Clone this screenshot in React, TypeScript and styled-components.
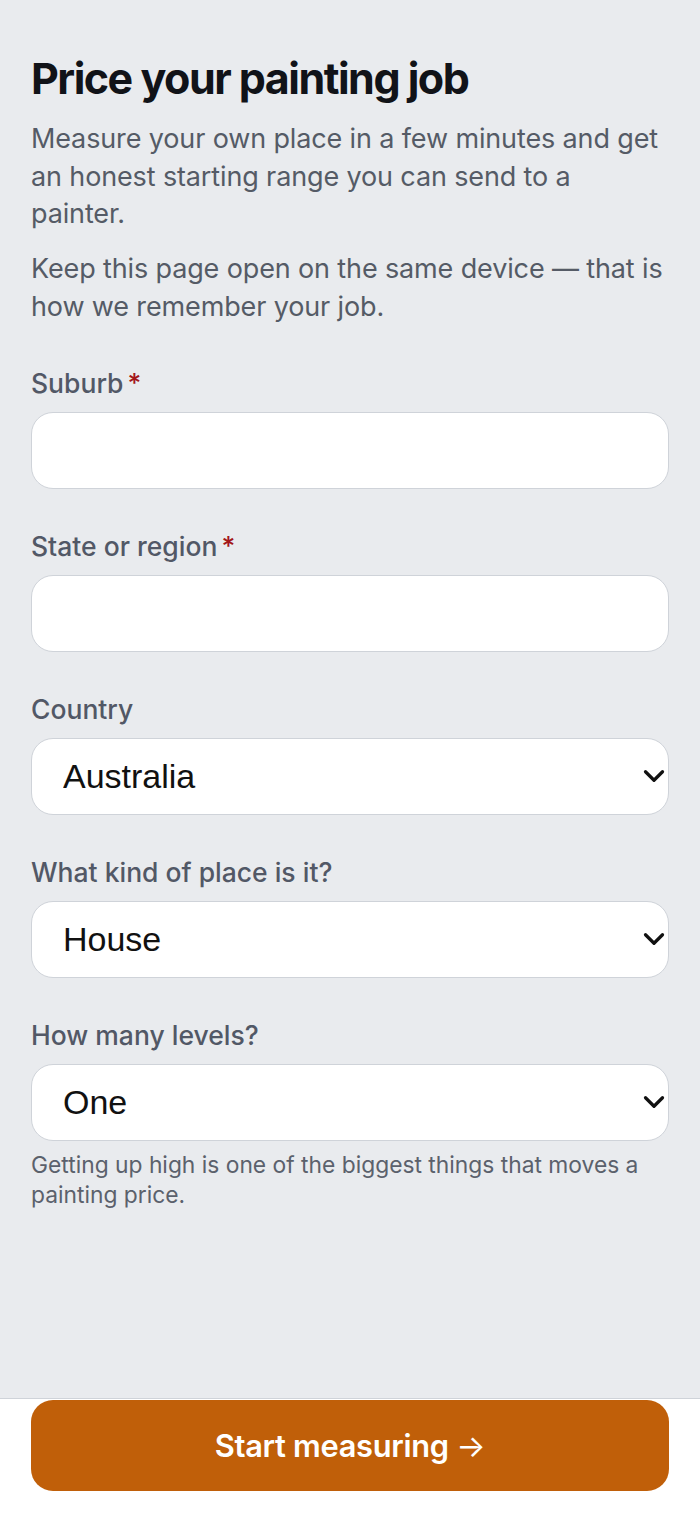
import styled, { createGlobalStyle } from "styled-components";
import { ChevronDown } from "lucide-react";

const GlobalStyle = createGlobalStyle`
  html, body {
    margin: 0;
    padding: 0;
    background: #e9ebee;
  }
  body {
    font-family: Inter, "Noto Sans", sans-serif;
    -webkit-font-smoothing: antialiased;
  }
  * {
    box-sizing: border-box;
  }
`;

const Page = styled.main`
  padding: 52px 31px 160px;
  display: flex;
  flex-direction: column;
`;

const Title = styled.h1`
  margin: 0 0 16px;
  font-size: 43px;
  line-height: 52px;
  font-weight: 700;
  letter-spacing: -0.035em;
  color: #111318;
`;

const Lead = styled.p`
  margin: 0 0 17.5px;
  max-width: 635px;
  font-size: 27px;
  line-height: 37.5px;
  letter-spacing: -0.005em;
  color: #555b66;
`;

const Form = styled.form`
  display: flex;
  flex-direction: column;
  gap: 41px;
  margin-top: 24px;
`;

const Field = styled.div`
  display: flex;
  flex-direction: column;
`;

const Label = styled.label`
  font-size: 26.5px;
  line-height: 32px;
  font-weight: 500;
  color: #525866;
  margin-bottom: 13px;
`;

const Required = styled.span`
  color: #a3161a;
  margin-left: 4px;
`;

const TextInput = styled.input`
  height: 77px;
  width: 100%;
  border: 1.5px solid #cfd3d9;
  border-radius: 22px;
  background: #fff;
  padding: 0 30px;
  font-size: 34px;
  font-family: "Liberation Sans", Arial, sans-serif;
  outline: none;
`;

const SelectWrap = styled.div`
  position: relative;
  display: flex;
`;

const Select = styled.select`
  appearance: none;
  height: 77px;
  width: 100%;
  border: 1.5px solid #cfd3d9;
  border-radius: 22px;
  background: #fff;
  padding: 0 50px 0 31px;
  font-size: 34px;
  font-family: "Liberation Sans", Arial, sans-serif;
  color: #111;
  outline: none;
`;

const Chevron = styled(ChevronDown)`
  position: absolute;
  right: -2px;
  top: 50%;
  transform: translateY(-50%);
  pointer-events: none;
  color: #111;
`;

const Hint = styled.p`
  margin: 9px 0 0;
  font-size: 22.8px;
  line-height: 30px;
  color: #5b616c;
`;

const Footer = styled.footer`
  position: fixed;
  left: 0;
  right: 0;
  bottom: 0;
  background: #fff;
  border-top: 1.5px solid #cfd3d9;
  padding: 1px 31px 24px;
`;

const Button = styled.button`
  width: 100%;
  height: 91px;
  border: none;
  border-radius: 22px;
  background: #c05f09;
  color: #fff;
  font-family: Inter, "Noto Sans", sans-serif;
  font-size: 30.8px;
  font-weight: 600;
  letter-spacing: -0.01em;
  cursor: pointer;
`;

const Arrow = styled.span`
  font-weight: 400;
`;

const fields = [
  { id: "suburb", label: "Suburb", required: true },
  { id: "state", label: "State or region", required: true },
];

const selects = [
  { id: "country", label: "Country", options: ["Australia", "New Zealand", "United Kingdom"] },
  { id: "type", label: "What kind of place is it?", options: ["House", "Apartment", "Townhouse"] },
  { id: "levels", label: "How many levels?", options: ["One", "Two", "Three or more"] },
];

export default function App() {
  return (
    <>
      <GlobalStyle />
      <Page>
        <Title>Price your painting job</Title>
        <Lead>
          Measure your own place in a few minutes and get an honest starting range you can send to a painter.
        </Lead>
        <Lead>Keep this page open on the same device — that is how we remember your job.</Lead>
        <Form onSubmit={(e) => e.preventDefault()}>
          {fields.map((f) => (
            <Field key={f.id}>
              <Label htmlFor={f.id}>
                {f.label}
                {f.required && <Required>*</Required>}
              </Label>
              <TextInput id={f.id} type="text" />
            </Field>
          ))}
          {selects.map((s) => (
            <Field key={s.id}>
              <Label htmlFor={s.id}>{s.label}</Label>
              <SelectWrap>
                <Select id={s.id} defaultValue={s.options[0]}>
                  {s.options.map((o) => (
                    <option key={o}>{o}</option>
                  ))}
                </Select>
                <Chevron size={34} strokeWidth={2.3} />
              </SelectWrap>
              {s.id === "levels" && (
                <Hint>Getting up high is one of the biggest things that moves a painting price.</Hint>
              )}
            </Field>
          ))}
        </Form>
      </Page>
      <Footer>
        <Button type="button">
          Start measuring <Arrow>→</Arrow>
        </Button>
      </Footer>
    </>
  );
}
